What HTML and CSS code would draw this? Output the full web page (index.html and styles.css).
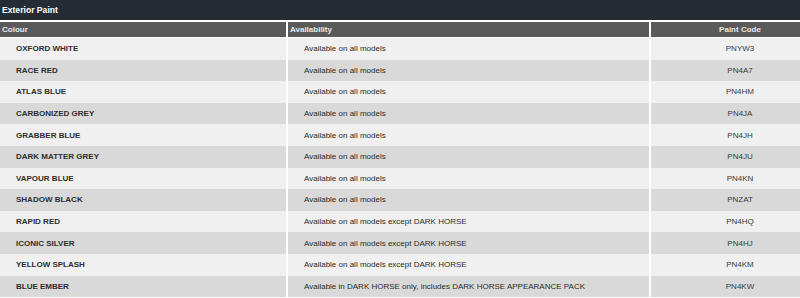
FILE: index.html
```html
<!DOCTYPE html>
<html lang="en">
<head>
<meta charset="utf-8">
<title>Exterior Paint</title>
<link rel="stylesheet" href="styles.css">
</head>
<body>
<div class="panel">
  <div class="title">Exterior Paint</div>
  <div class="row head">
    <div class="cell c1">Colour</div>
    <div class="cell c2">Availability</div>
    <div class="cell c3">Paint Code</div>
  </div>
  <div class="row odd"><div class="cell c1">OXFORD WHITE</div><div class="cell c2">Available on all models</div><div class="cell c3">PNYW3</div></div>
  <div class="row even"><div class="cell c1">RACE RED</div><div class="cell c2">Available on all models</div><div class="cell c3">PN4A7</div></div>
  <div class="row odd"><div class="cell c1">ATLAS BLUE</div><div class="cell c2">Available on all models</div><div class="cell c3">PN4HM</div></div>
  <div class="row even"><div class="cell c1">CARBONIZED GREY</div><div class="cell c2">Available on all models</div><div class="cell c3">PN4JA</div></div>
  <div class="row odd"><div class="cell c1">GRABBER BLUE</div><div class="cell c2">Available on all models</div><div class="cell c3">PN4JH</div></div>
  <div class="row even"><div class="cell c1">DARK MATTER GREY</div><div class="cell c2">Available on all models</div><div class="cell c3">PN4JU</div></div>
  <div class="row odd"><div class="cell c1">VAPOUR BLUE</div><div class="cell c2">Available on all models</div><div class="cell c3">PN4KN</div></div>
  <div class="row even"><div class="cell c1">SHADOW BLACK</div><div class="cell c2">Available on all models</div><div class="cell c3">PNZAT</div></div>
  <div class="row odd"><div class="cell c1">RAPID RED</div><div class="cell c2">Available on all models except DARK HORSE</div><div class="cell c3">PN4HQ</div></div>
  <div class="row even"><div class="cell c1">ICONIC SILVER</div><div class="cell c2">Available on all models except DARK HORSE</div><div class="cell c3">PN4HJ</div></div>
  <div class="row odd"><div class="cell c1">YELLOW SPLASH</div><div class="cell c2">Available on all models except DARK HORSE</div><div class="cell c3">PN4KM</div></div>
  <div class="row even"><div class="cell c1">BLUE EMBER</div><div class="cell c2">Available in DARK HORSE only, includes DARK HORSE APPEARANCE PACK</div><div class="cell c3">PN4KW</div></div>
</div>
</body>
</html>
```
FILE: styles.css
```css
html, body {
  margin: 0;
  padding: 0;
  background: #ffffff;
  overflow: hidden;
}
body {
  font-family: "Liberation Sans", Arial, sans-serif;
  font-size: 8px;
  color: #2b2b2b;
}
.panel {
  width: 829px;
}
.title {
  height: 20px;
  background: #262c36;
  color: #ffffff;
  font-weight: bold;
  font-size: 8.6px;
  display: flex;
  align-items: center;
  padding-left: 2px;
}
.row {
  display: grid;
  grid-template-columns: 286px 361px 1fr;
  column-gap: 2px;
  height: 21.6px;
}
.cell {
  display: flex;
  align-items: center;
}
.head {
  height: 15px;
  margin-top: 2px;
  margin-bottom: 1px;
}
.head .cell {
  background: #5a5a5a;
  color: #e8e8e8;
  font-weight: bold;
  padding-left: 2px;
}
.head .c3 {
  justify-content: center;
  padding-left: 0;
}
.odd .cell {
  background: #f0f0f0;
}
.even .cell {
  background: #d9d9d9;
}
.odd .c1, .even .c1 {
  padding-left: 16px;
  font-weight: bold;
  color: #2e2e2e;
}
.odd .c2, .even .c2 {
  padding-left: 16px;
  color: #2b2b2b;
}
.odd .c3, .even .c3 {
  justify-content: center;
  color: #3a3a3a;
}
```
